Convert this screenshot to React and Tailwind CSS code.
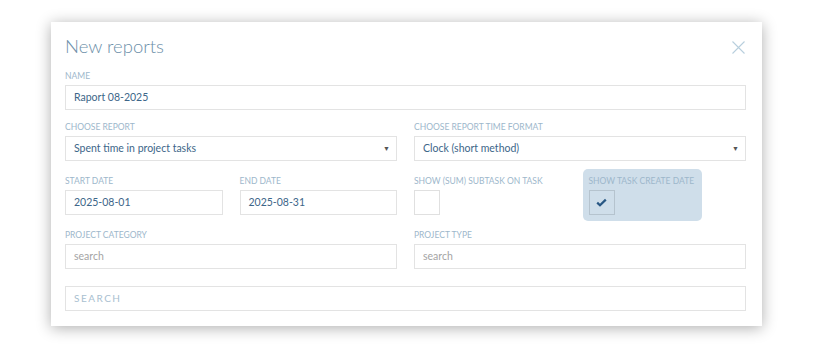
import React from 'react';

const Label = ({ children }) => (
    <div className="text-[8.5px] leading-[10px] uppercase text-[#9db7cb] mb-[4px] whitespace-nowrap">
        {children}
    </div>
);

const TextInput = ({ value, placeholder }) => (
    <div className="h-[25px] border border-[#e3e3e3] bg-white flex items-center px-[8px] text-[10.5px]">
        {value ? (
            <span className="text-[#3d6689]">{value}</span>
        ) : (
            <span className="text-[#a4a4a4]">{placeholder}</span>
        )}
    </div>
);

const Select = ({ value }) => (
    <div className="h-[25px] border border-[#e3e3e3] bg-white flex items-center justify-between pl-[8px] pr-[6px] text-[10.5px]">
        <span className="text-[#3d6689]">{value}</span>
        <span className="text-[7px] text-[#555]">▼</span>
    </div>
);

const Checkbox = ({ checked, dark }) => (
    <div
        className={`w-[26px] h-[25px] border flex items-center justify-center ${
            dark ? 'border-[#b5c3ce] bg-[#cfdeea]' : 'border-[#e0e0e0] bg-white'
        }`}
    >
        {checked && (
            <svg width="11" height="9" viewBox="0 0 11 9">
                <path d="M1.2 4.6 L4 7.3 L9.8 1.6" fill="none" stroke="#285784" strokeWidth="2.2" />
            </svg>
        )}
    </div>
);

const App = () => {
    return (
        <div className="w-[814px] h-[348px] bg-white pt-[22px]" style={{ fontFamily: 'Lato, "Open Sans", sans-serif' }}>
            <div className="ml-[51px] w-[711px] h-[304px] bg-white shadow-[0_2px_14px_rgba(0,0,0,0.32)] pl-[14px] pr-[16px] pt-[13px]">
                {/* Header */}
                <div className="flex justify-between items-center h-[24px]">
                    <h2 className="text-[18.5px] font-light text-[#6d8fa9]">New reports</h2>
                    <svg width="13" height="13" viewBox="0 0 13 13" className="mr-[1px]">
                        <path d="M0.5 0.5 L12.5 12.5 M12.5 0.5 L0.5 12.5" stroke="#b8cfdd" strokeWidth="1.1" />
                    </svg>
                </div>

                <div className="mt-[12px]">
                    <Label>Name</Label>
                    <TextInput value="Raport 08-2025" />
                </div>

                <div className="grid grid-cols-2 gap-x-[17px] mt-[12px]">
                    <div>
                        <Label>Choose report</Label>
                        <Select value="Spent time in project tasks" />
                    </div>
                    <div>
                        <Label>Choose report time format</Label>
                        <Select value="Clock (short method)" />
                    </div>
                </div>

                <div className="grid grid-cols-2 gap-x-[17px] mt-[15px]">
                    <div className="grid grid-cols-2 gap-x-[17px]">
                        <div>
                            <Label>Start date</Label>
                            <TextInput value="2025-08-01" />
                        </div>
                        <div>
                            <Label>End date</Label>
                            <TextInput value="2025-08-31" />
                        </div>
                    </div>
                    <div className="grid grid-cols-2 gap-x-[17px]">
                        <div>
                            <Label>Show (sum) subtask on task</Label>
                            <Checkbox />
                        </div>
                        <div className="-ml-[6px] -mt-[7px] -mb-[6px] pl-[6px] pr-[8px] pb-[6px] pt-[7px] bg-[#cfdeea] rounded-[5px] w-fit">
                            <Label>Show task create date</Label>
                            <Checkbox checked dark />
                        </div>
                    </div>
                </div>

                <div className="grid grid-cols-2 gap-x-[17px] mt-[15px]">
                    <div>
                        <Label>Project category</Label>
                        <TextInput placeholder="search" />
                    </div>
                    <div>
                        <Label>Project type</Label>
                        <TextInput placeholder="search" />
                    </div>
                </div>

                <div className="mt-[17px] h-[25px] border border-[#e3e3e3] flex items-center px-[8px]">
                    <span className="text-[10px] tracking-[1.5px] text-[#a9c0d0]">SEARCH</span>
                </div>
            </div>
        </div>
    );
};

export default App;
